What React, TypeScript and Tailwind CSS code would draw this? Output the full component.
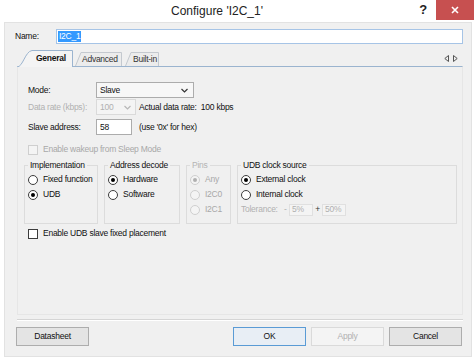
import React from "react";

const ui = "font-['Liberation_Sans',Arial,sans-serif]";

function Radio({
  label,
  checked,
  disabled,
}: {
  label: string;
  checked?: boolean;
  disabled?: boolean;
}) {
  return (
    <div className="flex items-center gap-[5px] h-[15px]">
      <span
        className={`w-[10px] h-[10px] rounded-full border flex items-center justify-center shrink-0 ${
          disabled ? "border-[#cfcfcf] bg-[#f4f4f4]" : "border-[#3c3c3c] bg-white"
        }`}
      >
        {checked && (
          <span
            className={`w-[4px] h-[4px] rounded-full ${
              disabled ? "bg-[#b0b0b0]" : "bg-black"
            }`}
          />
        )}
      </span>
      <span className={disabled ? "text-[#a8a8a8]" : "text-[#111]"}>
        {label}
      </span>
    </div>
  );
}

function Checkbox({ label, disabled }: { label: string; disabled?: boolean }) {
  return (
    <div className="flex items-center gap-[5px] h-[13px]">
      <span
        className={`w-[10px] h-[10px] border shrink-0 ${
          disabled ? "border-[#cfcfcf] bg-[#f4f4f4]" : "border-[#3c3c3c] bg-white"
        }`}
      />
      <span className={disabled ? "text-[#a8a8a8]" : "text-[#111]"}>
        {label}
      </span>
    </div>
  );
}

function Group({
  title,
  disabled,
  className,
  children,
}: {
  title: string;
  disabled?: boolean;
  className: string;
  children: React.ReactNode;
}) {
  return (
    <fieldset
      className={`border border-[#dcdcdc] px-[3px] pt-[1px] pb-[5px] min-w-0 ${className}`}
    >
      <legend
        className={`px-[2px] leading-[11px] ${
          disabled ? "text-[#b4b4b4]" : "text-[#111]"
        }`}
      >
        {title}
      </legend>
      {children}
    </fieldset>
  );
}

function Chevron({ color }: { color: string }) {
  return (
    <svg width="7" height="5" viewBox="0 0 7 5" className="shrink-0">
      <path d="M0.5 1 L3.5 4 L6.5 1" fill="none" stroke={color} strokeWidth="1.2" />
    </svg>
  );
}

function Tab({
  label,
  active,
  width,
  textLeft,
}: {
  label: string;
  active?: boolean;
  width: number;
  textLeft: number;
}) {
  const h = active ? 17 : 14;
  const slant = active ? 15 : 6;
  return (
    <div
      className={`relative shrink-0 ${active ? "z-10 -mb-[1px]" : ""}`}
      style={{ width, height: h }}
    >
      <svg width={width} height={h} className="absolute inset-0">
        <path
          d={
            active
              ? `M0 ${h} C 6 ${h} 8 1.5 ${slant} 0.5 L ${width - 0.5} 0.5 L ${width - 0.5} ${h}`
              : `M0.5 ${h} L ${slant} 0.5 L ${width - 0.5} 0.5 L ${width - 0.5} ${h}`
          }
          fill={active ? "#f4f4f4" : "#ececec"}
          stroke={active ? "#9bb4cf" : "#c4c9cf"}
          strokeWidth="1"
        />
      </svg>
      <span
        className={`absolute top-0 flex items-center ${
          active ? "font-bold text-[#111] h-[16px]" : "text-[#333] h-[14px]"
        }`}
        style={{ left: textLeft }}
      >
        {label}
      </span>
    </div>
  );
}

function Button({
  label,
  primary,
  disabled,
  className,
}: {
  label: string;
  primary?: boolean;
  disabled?: boolean;
  className?: string;
}) {
  return (
    <div
      className={`w-[73px] h-[19px] border flex items-center justify-center ${
        primary
          ? "border-[#5a9bd5] bg-[#e8eef5] text-[#111]"
          : disabled
          ? "border-[#dadada] bg-[#f4f4f4] text-[#b0b0b0]"
          : "border-[#adadad] bg-[#e4e4e4] text-[#111]"
      } ${className ?? ""}`}
    >
      {label}
    </div>
  );
}

export default function App() {
  return (
    <div
      className={`w-[474px] h-[360px] bg-white flex flex-col overflow-hidden whitespace-nowrap text-[8.5px] tracking-[-0.25px] ${ui}`}
    >
      {/* Title bar */}
      <div className="h-[22px] shrink-0 flex items-start">
        <div className="flex-1 h-[22px] flex items-center justify-center pl-[24px] text-[12px] tracking-normal text-[#222]">
          Configure 'I2C_1'
        </div>
        <div className="w-[26px] h-[20px] flex items-center justify-center text-[13px] font-bold text-[#222]">
          ?
        </div>
        <div className="w-[38px] h-[20px] bg-[#c75050] flex items-center justify-center">
          <svg width="8" height="8" viewBox="0 0 8 8">
            <path d="M1 1 L7 7 M7 1 L1 7" stroke="#fff" strokeWidth="1.6" />
          </svg>
        </div>
      </div>

      {/* Window body */}
      <div className="flex-1 ml-[4px] mr-[2px] mb-[3px] bg-[#f0f0f0] border border-[#e2e2e2] flex flex-col">
        {/* Name row */}
        <div className="flex items-center h-[15px] mt-[6px] pl-[10px] pr-[8px]">
          <span className="w-[41px] text-[#111]">Name:</span>
          <div className="flex-1 h-[15px] bg-white border border-[#a6c4e6] flex items-center pl-[1px]">
            <span className="bg-[#3399ff] text-white px-[1px] leading-[11px]">
              I2C_1
            </span>
          </div>
        </div>

        {/* Tabs */}
        <div className="mt-[7px] ml-[12px] mr-[8px] flex items-end h-[15px] relative">
          <Tab label="General" active width={56} textLeft={19} />
          <div className="w-[2px]" />
          <Tab label="Advanced" width={47} textLeft={7} />
          <div className="w-[3px]" />
          <Tab label="Built-in" width={34} textLeft={8} />
          <div className="flex-1" />
          <div className="flex items-center gap-[4px] self-center pr-[5px]">
            <svg width="5" height="7" viewBox="0 0 5 7">
              <path d="M4.5 0.5 L0.8 3.5 L4.5 6.5 Z" fill="none" stroke="#555" strokeWidth="1" />
            </svg>
            <svg width="5" height="7" viewBox="0 0 5 7">
              <path d="M0.5 0.5 L4.2 3.5 L0.5 6.5 Z" fill="none" stroke="#555" strokeWidth="1" />
            </svg>
          </div>
        </div>

        {/* Panel */}
        <div className="ml-[12px] mr-[8px] h-[249px] border border-t-[#9bb4cf] border-x-[#e6e6e6] border-b-[#e6e6e6] bg-[#f0f0f0] pl-[10px] pt-[15px]">
          {/* Mode */}
          <div className="flex items-center h-[16px]">
            <span className="w-[68px] text-[#111]">Mode:</span>
            <div className="w-[98px] h-[16px] border border-[#acacac] bg-[#f7f7f7] flex items-center justify-between pl-[3px] pr-[5px] text-[#111]">
              Slave
              <Chevron color="#333" />
            </div>
          </div>
          {/* Data rate */}
          <div className="flex items-center h-[16px] mt-[1px]">
            <span className="w-[68px] text-[#b0b0b0]">Data rate (kbps):</span>
            <div className="w-[40px] h-[16px] border border-[#dadada] bg-[#f4f4f4] flex items-center justify-between pl-[3px] pr-[4px] text-[#b0b0b0]">
              100
              <Chevron color="#b8b8b8" />
            </div>
            <span className="ml-[3px] text-[#111]">
              Actual data rate:&nbsp; 100 kbps
            </span>
          </div>
          {/* Slave address */}
          <div className="flex items-center h-[16px] mt-[4px]">
            <span className="w-[68px] text-[#111]">Slave address:</span>
            <div className="w-[36px] h-[16px] border border-[#acacac] bg-white flex items-center pl-[3px] text-[#111]">
              58
            </div>
            <span className="ml-[7px] text-[#111]">(use '0x' for hex)</span>
          </div>
          {/* Wakeup */}
          <div className="mt-[8px]">
            <Checkbox label="Enable wakeup from Sleep Mode" disabled />
          </div>

          {/* Groups */}
          <div className="flex gap-[6px] mt-[4px] -ml-[4px] h-[64px]">
            <Group title="Implementation" className="w-[74px]">
              <Radio label="Fixed function" />
              <Radio label="UDB" checked />
            </Group>
            <Group title="Address decode" className="w-[76px]">
              <Radio label="Hardware" checked />
              <Radio label="Software" />
            </Group>
            <Group title="Pins" disabled className="w-[45px]">
              <Radio label="Any" checked disabled />
              <Radio label="I2C0" disabled />
              <Radio label="I2C1" disabled />
            </Group>
            <Group title="UDB clock source" className="w-[220px]">
              <Radio label="External clock" checked />
              <Radio label="Internal clock" />
              <div className="flex items-center h-[15px] text-[#b0b0b0]">
                <span className="w-[43px]">Tolerance:</span>
                <span className="w-[5px]">-</span>
                <div className="w-[24px] h-[12px] border border-[#e0e0e0] bg-[#f4f4f4] flex items-center pl-[2px]">
                  5%
                </div>
                <span className="w-[9px] text-center text-[#333]">+</span>
                <div className="w-[24px] h-[12px] border border-[#e0e0e0] bg-[#f4f4f4] flex items-center pl-[2px]">
                  50%
                </div>
              </div>
            </Group>
          </div>

          {/* Fixed placement */}
          <div className="mt-[3px]">
            <Checkbox label="Enable UDB slave fixed placement" />
          </div>
        </div>

        {/* Separator */}
        <div className="ml-[12px] mr-[8px] mt-[4px] h-[2px] border-t border-[#d5d5d5] border-b border-b-white" />

        {/* Buttons */}
        <div className="flex items-center mt-[6px] pl-[11px] pr-[9px]">
          <Button label="Datasheet" />
          <div className="flex-1" />
          <Button label="OK" primary />
          <Button label="Apply" disabled className="ml-[5px]" />
          <Button label="Cancel" className="ml-[5px]" />
        </div>
      </div>
    </div>
  );
}
